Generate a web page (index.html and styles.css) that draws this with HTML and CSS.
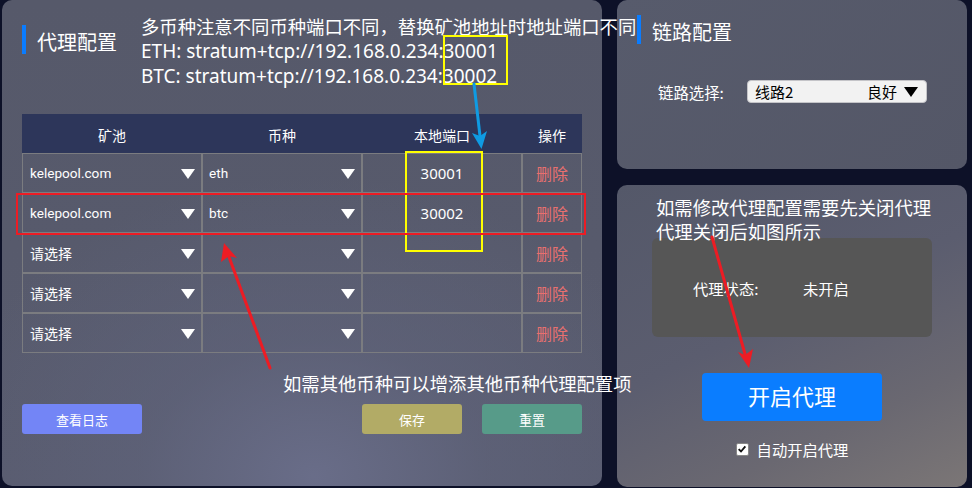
FILE: index.html
```html
<!DOCTYPE html>
<html lang="zh-CN">
<head>
<meta charset="utf-8">
<title>代理配置</title>
<link rel="stylesheet" href="styles.css">
</head>
<body>
<div class="page">
  <section class="panel proxy">
    <h2 class="panel-title"><span class="bar"></span><span>代理配置</span></h2>
    <table class="grid">
      <colgroup><col class="c1"><col class="c2"><col class="c3"><col class="c4"></colgroup>
      <thead>
        <tr><th>矿池</th><th>币种</th><th>本地端口</th><th>操作</th></tr>
      </thead>
      <tbody>
        <tr>
          <td><div class="sel"><span>kelepool.com</span><i class="tri"></i></div></td>
          <td><div class="sel"><span>eth</span><i class="tri"></i></div></td>
          <td class="port">30001</td>
          <td class="del">删除</td>
        </tr>
        <tr>
          <td><div class="sel"><span>kelepool.com</span><i class="tri"></i></div></td>
          <td><div class="sel"><span>btc</span><i class="tri"></i></div></td>
          <td class="port">30002</td>
          <td class="del">删除</td>
        </tr>
        <tr>
          <td><div class="sel"><span class="cjk">请选择</span><i class="tri"></i></div></td>
          <td><div class="sel"><span></span><i class="tri"></i></div></td>
          <td class="port"></td>
          <td class="del">删除</td>
        </tr>
        <tr>
          <td><div class="sel"><span class="cjk">请选择</span><i class="tri"></i></div></td>
          <td><div class="sel"><span></span><i class="tri"></i></div></td>
          <td class="port"></td>
          <td class="del">删除</td>
        </tr>
        <tr>
          <td><div class="sel"><span class="cjk">请选择</span><i class="tri"></i></div></td>
          <td><div class="sel"><span></span><i class="tri"></i></div></td>
          <td class="port"></td>
          <td class="del">删除</td>
        </tr>
      </tbody>
    </table>
    <div class="actions">
      <button class="btn log">查看日志</button>
      <span class="spacer"></span>
      <button class="btn save">保存</button>
      <button class="btn reset">重置</button>
    </div>
  </section>
  <div class="side">
    <section class="panel link">
      <h2 class="panel-title small"><span class="bar"></span><span>链路配置</span></h2>
      <div class="link-row">
        <span class="link-label">链路选择:</span>
        <div class="link-select"><span class="line">线路2</span><span class="state">良好</span><i class="tri dark"></i></div>
      </div>
    </section>
    <section class="panel status">
      <div class="status-box">
        <span class="st-label">代理状态:</span>
        <span class="st-value">未开启</span>
      </div>
      <button class="start">开启代理</button>
      <label class="auto"><span class="check"><svg viewBox="0 0 12 12" width="10" height="10"><path d="M2 6.2 L4.8 9 L10 2.8" fill="none" stroke="#111" stroke-width="2.2"/></svg></span>自动开启代理</label>
    </section>
  </div>
</div>

<div class="note note-top">多币种注意不同币种端口不同，替换矿池地址时地址端口不同<br><span class="lat">ETH: stratum+tcp://192.168.0.234:30001</span><br><span class="lat">BTC: stratum+tcp://192.168.0.234:30002</span></div>
<div class="note note-mid">如需其他币种可以增添其他币种代理配置项</div>
<div class="note note-right">如需修改代理配置需要先关闭代理<br>代理关闭后如图所示</div>

<svg class="marks" width="972" height="488" viewBox="0 0 972 488">
  <rect x="444" y="36" width="63" height="48" fill="none" stroke="#ffff00" stroke-width="2"/>
  <rect x="406" y="152" width="76" height="99" fill="none" stroke="#ffff00" stroke-width="2"/>
  <rect x="17" y="194" width="568" height="40" fill="none" stroke="#ed1c24" stroke-width="2"/>
  <line x1="474" y1="84" x2="480" y2="136" stroke="#0f9be3" stroke-width="3" stroke-linecap="round"/>
  <path d="M472 133 L481.5 149 L487 131 L480 136 Z" fill="#0f9be3"/>
  <line x1="270" y1="368" x2="229" y2="257" stroke="#ed1c24" stroke-width="3" stroke-linecap="round"/>
  <path d="M224 243 L221 262 L229 256 L237 258 Z" fill="#ed1c24"/>
  <line x1="712" y1="237" x2="745" y2="354" stroke="#ed1c24" stroke-width="3" stroke-linecap="round"/>
  <path d="M749 368 L738 352 L745 355 L753 349 Z" fill="#ed1c24"/>
</svg>
</body>
</html>
```
FILE: styles.css
```css
* { box-sizing: border-box; }
html, body {
  margin: 0;
  padding: 0;
  width: 972px;
  height: 488px;
  overflow: hidden;
  background: #0d1128;
  font-family: "Noto Sans CJK SC", "Noto Sans", sans-serif;
  color: #fff;
}
.page {
  display: flex;
  gap: 15px;
  padding: 0 0 0 2px;
  height: 488px;
  position: relative;
}
.panel {
  border-radius: 10px;
}
.proxy {
  width: 600px;
  height: 486px;
  padding: 25px 20px 0;
  background:
    radial-gradient(ellipse 380px 300px at 52% 98%, rgba(106,110,138,0.95) 0%, rgba(96,100,124,0.6) 45%, rgba(86,89,107,0) 100%),
    linear-gradient(180deg, #56596a 0%, #585b6e 100%);
}
.panel-title {
  display: flex;
  align-items: center;
  height: 29px;
  margin: 0;
  font-size: 20px;
  font-weight: normal;
  line-height: 29px;
}
.panel-title .bar {
  width: 4px;
  height: 29px;
  background: #0a7cff;
  margin-right: 11px;
}
.panel-title span + span { padding-top: 3px; }
.grid {
  margin-top: 60px;
  width: 560px;
  table-layout: fixed;
  border-collapse: separate;
  border-spacing: 0;
  font-size: 14px;
}
.grid col.c1 { width: 180px; }
.grid col.c2 { width: 160px; }
.grid col.c3 { width: 160px; }
.grid col.c4 { width: 60px; }
.grid th {
  height: 39px;
  background: #2d365a;
  font-weight: normal;
  font-size: 14px;
  text-align: center;
  padding: 0;
  padding-top: 2px;
}
.grid td {
  height: 40px;
  border: 1px solid #7b7c80;
  padding: 0;
  vertical-align: middle;
}
.sel {
  display: flex;
  align-items: center;
  justify-content: space-between;
  padding: 0 6px 0 7px;
  font-family: "Roboto", "Noto Sans CJK SC", sans-serif;
  font-size: 13.6px;
}
.grid td:nth-child(2) .sel { padding-left: 6px; }
.sel .cjk { font-family: "Noto Sans CJK SC", sans-serif; font-size: 14px; }
.tri {
  display: block;
  width: 0;
  height: 0;
  border-left: 7px solid transparent;
  border-right: 7px solid transparent;
  border-top: 10px solid #fff;
  margin-top: 1px;
}
.tri.dark { border-top-color: #000; border-left-width: 7.5px; border-right-width: 7.5px; }
.port {
  text-align: center;
  font-family: "Noto Sans", sans-serif;
  font-size: 15px;
}
.del {
  text-align: center;
  color: #e8706f;
  font-size: 16px;
}
.actions {
  display: flex;
  margin-top: 51px;
  gap: 20px;
}
.spacer { flex: 1; }
.btn {
  height: 30px;
  border: 0;
  border-radius: 3px;
  color: #fff;
  font-family: "Noto Sans CJK SC", sans-serif;
  font-size: 13px;
  padding: 0;
}
.btn.log { width: 120px; background: #7385f6; }
.btn.save { width: 100px; background: #b2ab66; }
.btn.reset { width: 100px; background: #579b89; }

.side {
  width: 350px;
  display: flex;
  flex-direction: column;
  gap: 16px;
}
.link {
  height: 169px;
  padding: 15px 20px 0;
  background: linear-gradient(135deg, #575b6c 0%, #545767 100%);
}
.link-row {
  display: flex;
  align-items: center;
  margin-top: 36px;
  padding-left: 21px;
}
.link-label {
  font-size: 15.4px;
  width: 89px;
}
.link-select {
  display: flex;
  align-items: center;
  width: 180px;
  height: 23px;
  background: #f2f2f2;
  border: 1px solid #c4c4c8;
  border-radius: 4px;
  color: #000;
  font-size: 15px;
  padding: 0 8px 0 7px;
}
.link-select .line { flex: 1; }
.link-select .state { margin-right: 7px; }
.status {
  height: 302px;
  padding-top: 53px;
  display: flex;
  flex-direction: column;
  align-items: center;
  background: linear-gradient(155deg, #545869 0%, #5b5d6f 45%, #6a6871 75%, #7b7676 100%);
}
.status-box {
  width: 280px;
  height: 99px;
  background: #565656;
  border-radius: 6px;
  display: flex;
  align-items: center;
  padding-left: 41px;
  font-size: 15.3px;
}
.st-label { width: 110px; }
.start {
  margin-top: 36px;
  width: 180px;
  height: 48px;
  border: 0;
  border-radius: 4px;
  background: #0a7dff;
  color: #fff;
  font-family: "Noto Sans CJK SC", sans-serif;
  font-size: 22px;
  padding: 0 0 5px;
}
.auto {
  display: flex;
  align-items: center;
  margin-top: 17px;
  font-size: 15.3px;
}
.check {
  width: 13px;
  height: 13px;
  background: #fff;
  border: 1px solid #888;
  border-radius: 2px;
  margin-right: 8px;
  display: flex;
  align-items: center;
  justify-content: center;
}
.check svg { display: block; }

.note {
  position: absolute;
  font-size: 18.35px;
  line-height: 24px;
  color: #fff;
  white-space: nowrap;
}
.note .lat { font-family: "Noto Sans", sans-serif; font-size: 19px; }
.note-top { left: 141px; top: 14px; }
.note-mid { left: 283px; top: 371px; }
.note-right { left: 656px; top: 195px; }
.marks {
  position: absolute;
  left: 0;
  top: 0;
  pointer-events: none;
}
```
